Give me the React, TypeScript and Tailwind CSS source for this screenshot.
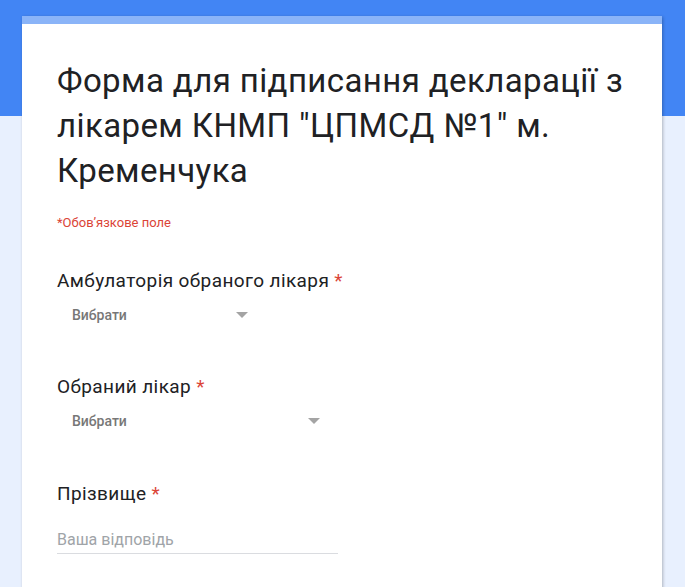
const font = { fontFamily: 'Roboto, "Noto Sans", Arial, sans-serif' }

function Star() {
  return <span className="text-[#db4437]"> *</span>
}

function Dropdown({ width }: { width: string }) {
  return (
    <div className={`${width} h-[32px] flex items-center pl-[15px] pr-[9px]`}>
      <span className="flex-1 text-[14px] font-medium text-[#777777]">Вибрати</span>
      <span className="w-0 h-0 border-x-[6px] border-x-transparent border-t-[6px] border-t-[#a4a4a4]" />
    </div>
  )
}

export default function App() {
  return (
    <div className="min-h-[587px] bg-[#e8f0fe] overflow-hidden" style={font}>
      <div className="h-[116px] bg-[#4285f4]" />
      <div className="relative -mt-[100px] ml-[22px] w-[640px] bg-white shadow-[1px_1px_3px_rgba(0,0,0,0.25)]">
        <div className="h-[8px] bg-[#8ab4f8]" />
        <div className="pl-[35px] pr-[15px] pt-[34px] pb-[80px]">
          <h1 className="text-[33px] leading-[45px] tracking-[0.4px] text-[#202124] font-normal">
            Форма для підписання декларації з лікарем КНМП "ЦПМСД №1" м. Кременчука
          </h1>
          <p className="mt-[22px] text-[13px] leading-[16px] text-[#db4437]">*Обов’язкове поле</p>

          <div className="mt-[38px] text-[19px] leading-[24px] tracking-[0.4px] text-[#202124]">
            Амбулаторія обраного лікаря<Star />
          </div>
          <div className="mt-[6px]">
            <Dropdown width="w-[200px]" />
          </div>

          <div className="mt-[44px] text-[19px] leading-[24px] tracking-[0.4px] text-[#202124]">
            Обраний лікар<Star />
          </div>
          <div className="mt-[6px]">
            <Dropdown width="w-[272px]" />
          </div>

          <div className="mt-[45px] text-[19px] leading-[24px] tracking-[0.4px] text-[#202124]">
            Прізвище<Star />
          </div>
          <div className="mt-[22px] w-[281px] border-b border-[#dadce0] pb-[1px] text-[16px] leading-[24px] text-[#a0a4a8]">
            Ваша відповідь
          </div>
        </div>
      </div>
    </div>
  )
}
